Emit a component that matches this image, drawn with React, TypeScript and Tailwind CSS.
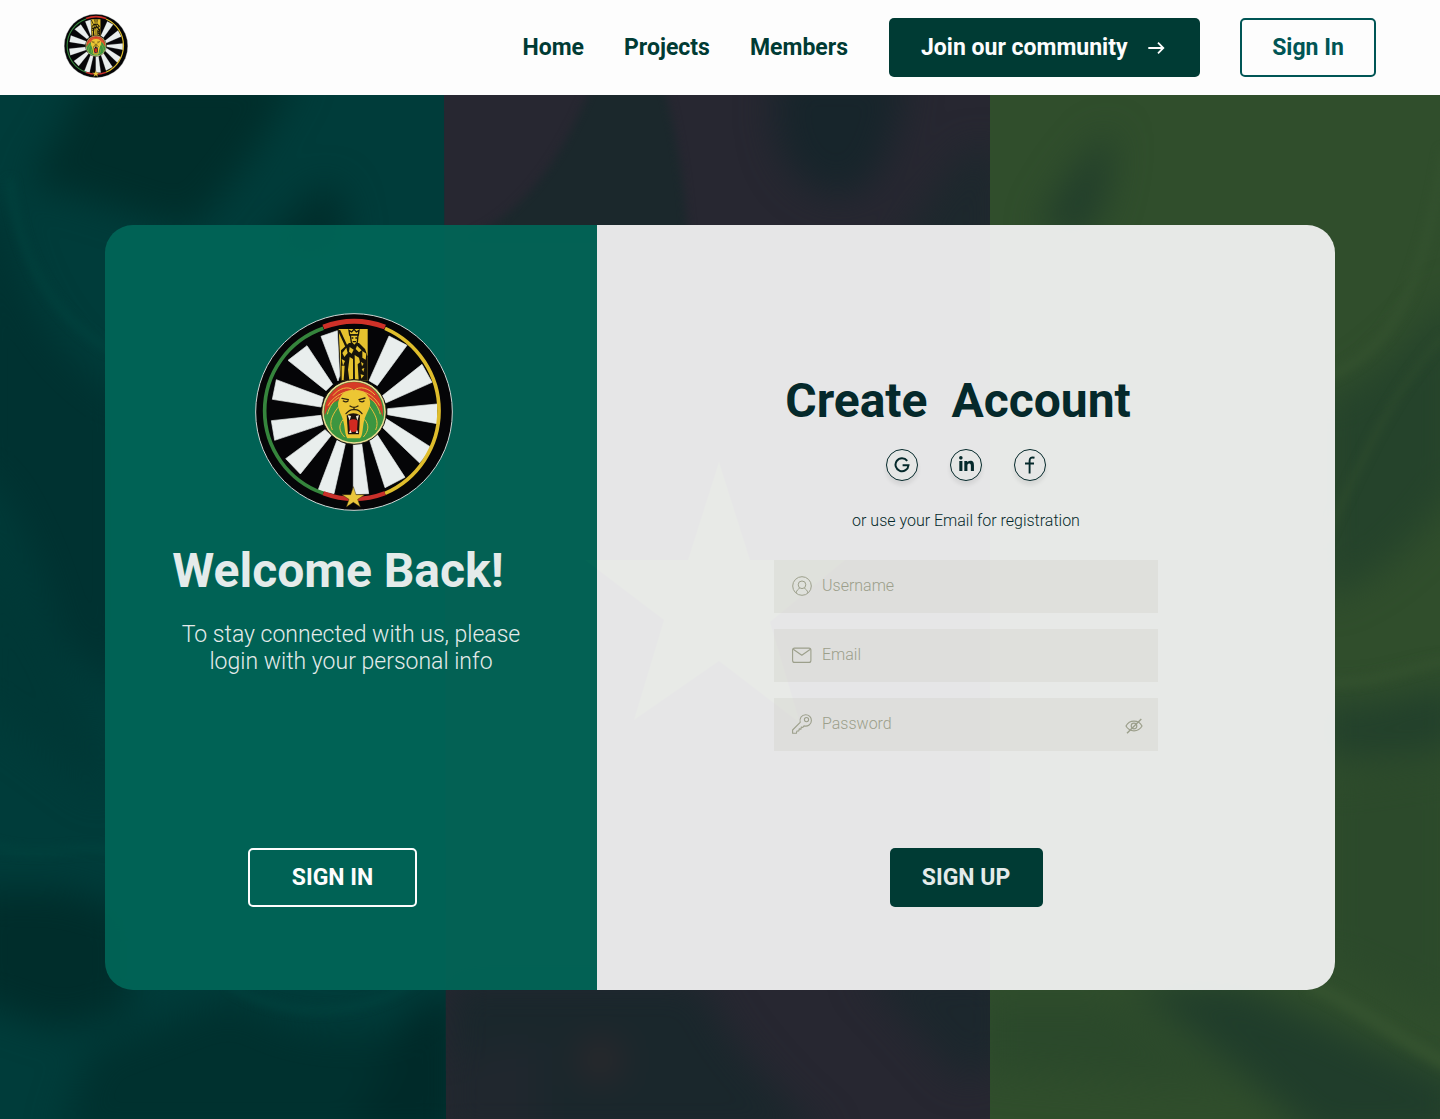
import React from "react";
import { FaLinkedinIn } from "react-icons/fa";

const spokes = [
  "228,108 277,91 284,226 279,242",
  "186,136 129,180 243,271 263,252",
  "94,238 82,297 228,320 235,291",
  "79,361 89,420 234,372 228,345",
  "122,475 166,521 259,405 240,388",
  "219,570 267,580 301,430 276,420",
  "325,582 371,580 350,428 325,432",
  "420,562 480,531 396,402 374,420",
  "524,488 560,442 422,354 411,380",
  "576,311 576,370 428,343 428,325",
  "561,246 531,192 411,287 422,308",
  "486,135 432,107 372,241 397,256",
];

function Emblem({ className }: { className?: string }) {
  return (
    <svg viewBox="30 38 594 594" className={className} aria-label="Round Table emblem">
      <circle cx="327" cy="335" r="295" fill="#050507" stroke="#cfd6d4" strokeWidth="3" />
      {spokes.map((p) => (
        <polygon key={p} points={p} fill="#e9eeed" stroke="#e9eeed" strokeWidth="2" />
      ))}
      <g fill="none" strokeWidth="11">
        <path d="M235 579A262 262 0 0 1 235 84" stroke="#35853c" />
        <path d="M420 84A270 270 0 0 1 420 579" stroke="#dfbd2c" />
        <path d="M235 80A262 262 0 0 1 420 80" stroke="#cf3128" strokeWidth="15" />
        <path d="M235 579A262 262 0 0 0 420 579" stroke="#c9302a" strokeWidth="13" />
      </g>
      <path d="M281 86H368V241H288Z" fill="#e6c22e" />
      <path d="M288 150L312 128H342L360 146L368 168V241H288Z" fill="#17140b" />
      <g stroke="#17140b" strokeWidth="4" fill="#e6c22e">
        <path d="M314 104L312 90L320 95L327 87L334 95L342 90L340 104Z" />
        <path d="M316 104H339L337 126L328 136L319 126Z" />
        <path d="M320 113h5M331 113h5M323 124h10" />
      </g>
      <path d="M282 90L309 148" stroke="#17140b" strokeWidth="7" />
      <path
        d="M292 158L304 142L308 158L298 170ZM314 140L326 148L320 160L312 154ZM336 136L350 150L342 156L332 146ZM352 152L364 160L362 178L352 172ZM290 176L300 182L294 196ZM290 196H299L296 239H290ZM314 170L324 176V236L313 240L309 208ZM329 164L342 172L345 186L338 192L341 238H330ZM348 184L356 190L351 198ZM350 206L358 203L355 215ZM347 222L357 225L349 235Z"
        fill="#e6c22e"
      />
      <circle cx="327" cy="335" r="97" fill="#e9dc92" stroke="#16160f" strokeWidth="3" />
      <circle cx="327" cy="335" r="91" fill="#3c9640" />
      <path d="M239 347C233 288 276 246 327 245C380 246 420 288 413 350C406 324 394 307 378 300L326 267L276 302C258 310 246 323 239 347Z" fill="#d63b27" />
      <path
        d="M327 270C349 266 371 279 374 299C381 320 362 339 357 362C352 384 354 405 345 414H307C299 402 300 382 295 363C290 340 272 320 282 298C288 278 309 266 327 270Z"
        fill="#ecc634"
      />
      <g fill="none" stroke="#e9bd3c" strokeWidth="3">
        <path d="M326 271C310 254 280 265 264 286M310 274C292 274 262 292 249 316M283 291C265 300 253 320 247 342M327 271C343 254 372 264 390 284M346 274C366 274 391 291 404 316M371 291C388 300 400 320 406 342M284 315C266 338 249 362 262 389M295 357C280 374 281 392 299 410M372 315C388 338 404 362 392 389M358 357C374 374 371 392 355 410" />
      </g>
      <g fill="none" stroke="#2b230f" strokeWidth="4" strokeLinecap="round">
        <path d="M291 294l19 4M342 298l18-5M295 302q8 5 14 0M344 302q8 5 13 0M315 317q12 8 24 0M327 321v7M303 340q12-14 24-12q14-2 24 12" />
      </g>
      <path d="M305 345Q325 333 345 345L342 402H309Z" fill="#1c120d" />
      <path d="M312 361Q325 353 338 361L336 391Q325 399 314 391Z" fill="#d02a21" />
      <path d="M308 345l6 16 4-14M342 345l-5 16-4-14M312 398l4-10 4 10M340 398l-4-10-4 10" fill="#f4edd7" />
      <path d="M325 559L333 583L359 583L338 597L346 620L325 606L304 620L312 597L291 583L317 583Z" fill="#e9c63c" stroke="#3a2e10" strokeWidth="1.5" />
    </svg>
  );
}

function Backdrop() {
  return (
    <svg className="absolute inset-0 h-full w-full" viewBox="0 95 1440 1024" preserveAspectRatio="none" aria-hidden="true">
      <defs>
        <filter id="soft" x="-40%" y="-40%" width="180%" height="180%" colorInterpolationFilters="sRGB">
          <feGaussianBlur stdDeviation="18" />
        </filter>
        <filter id="fine" x="-40%" y="-40%" width="180%" height="180%" colorInterpolationFilters="sRGB">
          <feGaussianBlur stdDeviation="5" />
        </filter>
        <clipPath id="left"><path d="M0 95H444L446 1119H0Z" /></clipPath>
        <clipPath id="mid"><path d="M444 95H990V1119H446Z" /></clipPath>
        <clipPath id="right"><path d="M990 95H1440V1119H990Z" /></clipPath>
      </defs>
      <g clipPath="url(#left)">
        <path d="M0 95H450V1119H0Z" fill="#003c3a" />
        <g filter="url(#soft)">
          <path d="M90 70H300C270 130 240 180 190 230L60 190C20 190 30 180 55 140Z" fill="#002e2b" />
          <path d="M320 185C340 180 350 210 345 260H250Z" fill="#002d2b" />
          <path d="M-30 200L5 210C20 300 60 360 130 400V700L60 640C30 540 0 480 -30 470Z" fill="#003231" />
          <path d="M-30 480L40 620L105 740V800L-30 700Z" fill="#003836" />
          <path d="M-30 890L60 890L130 910V1010L60 1030L-30 1000Z" fill="#002d2b" />
          <path d="M90 1050C180 1020 210 1000 240 1000C300 1040 380 1040 450 1010V1140H60Z" fill="#00312f" />
          <path d="M410 1010L460 990V1140H350Z" fill="#002a29" />
        </g>
        <g filter="url(#fine)" fill="none" stroke="#00443f" strokeWidth="5">
          <path d="M10 180C20 270 60 320 110 350" />
          <path d="M-10 845C40 860 70 845 110 850" />
          <path d="M230 985C280 1020 370 1020 420 975" />
        </g>
      </g>
      <g clipPath="url(#mid)">
        <path d="M440 95H994V1119H440Z" fill="#272731" />
        <g filter="url(#fine)">
          <path d="M594 80H662C676 130 684 180 688 240H460C520 220 562 160 594 80Z" fill="#1b282c" />
        </g>
        <g filter="url(#soft)">
          <path d="M780 70H905C900 130 880 185 850 195C800 200 760 150 780 70Z" fill="#17252b" />
          <path d="M900 240L965 150L1000 150V260H880Z" fill="#1d282d" />
          <path d="M450 980H700C720 1030 760 1080 830 1140H446Z" fill="#1a272c" />
          <path d="M440 1060L540 1040V1140H440Z" fill="#20272e" />
          <path d="M860 970H1010V1060L960 1080Z" fill="#1c272d" />
          <circle cx="600" cy="1060" r="20" fill="#30282c" />
        </g>
      </g>
      <path d="M719 462L750 560H845L770 622L800 723L719 661L634 720L664 620L585 560H688Z" fill="#3c5c2c" opacity=".8" />
      <g clipPath="url(#right)">
        <path d="M990 95H1440V1119H990Z" fill="#304e2c" />
        <g filter="url(#soft)">
          <path d="M1040 230C1060 190 1080 160 1112 130C1112 180 1100 220 1080 240Z" fill="#213d2b" />
          <path d="M1320 400C1380 380 1420 330 1460 290V480C1420 540 1380 580 1320 600Z" fill="#25432b" />
          <path d="M1320 700C1370 715 1410 690 1460 685V745C1420 755 1370 760 1320 755Z" fill="#22402b" />
          <path d="M1320 780L1460 760V1020L1320 960Z" fill="#2c4a2b" />
          <path d="M1130 985H1240C1320 1020 1400 1060 1460 1080V1140H1320C1250 1080 1190 1030 1130 985Z" fill="#203d2b" />
          <path d="M980 1000H1110L1240 1090L980 1070Z" fill="#2b492b" />
        </g>
        <g filter="url(#fine)" fill="none" stroke="#34522f" strokeWidth="7">
          <path d="M1445 150C1420 300 1390 350 1325 378" />
          <path d="M1445 335C1400 380 1370 440 1325 540" strokeWidth="3" />
          <path d="M1325 682C1370 686 1410 666 1450 660" />
          <path d="M1310 985C1350 1000 1400 1040 1450 1065" strokeWidth="14" />
        </g>
      </g>
    </svg>
  );
}

function UserIcon() {
  return (
    <svg width="20" height="20" viewBox="0 0 20 20" fill="none" stroke="currentColor" strokeWidth="1">
      <circle cx="10" cy="10" r="9.3" />
      <circle cx="10" cy="8.8" r="3.8" />
      <path d="M4 17C4.7 14.2 6.5 12.8 7.7 12.2M16 17C15.3 14.2 13.5 12.8 12.3 12.2" />
    </svg>
  );
}

function MailIcon() {
  return (
    <svg width="20" height="20" viewBox="0 0 20 20" fill="none" stroke="currentColor" strokeWidth="1.1" strokeLinejoin="round">
      <rect x=".6" y="3.1" width="18.3" height="14.3" rx="2" />
      <path d="M1.2 4.2L9.8 10.2L18.4 4.2" />
    </svg>
  );
}

function KeyIcon() {
  return (
    <svg width="20" height="20" viewBox="0 0 20 20" fill="none" stroke="currentColor" strokeWidth="1.1" strokeLinejoin="round">
      <path d="M8.2 8.4C7.2 4.4 9.7.7 13.6.7C17 .7 19.4 3.2 19.4 6.4C19.4 10.2 15.9 12.9 12 11.9L10.8 13.5L9.3 13L9 15.3L7.2 14.9L6.8 17H4.9L4.4 19.3H.6V16Z" />
      <circle cx="14.5" cy="5.6" r="2.1" />
    </svg>
  );
}

function EyeOffIcon() {
  return (
    <svg className="relative top-0.5" width="18" height="16" viewBox="0 0 18 16" fill="none" stroke="currentColor" strokeWidth="1.2">
      <path d="M1 8C4.5 1.6 13.5 1.6 17 8C13.5 14.4 4.5 14.4 1 8Z" />
      <circle cx="9" cy="8" r="2.8" />
      <path d="M2 15.3L16.3 .9" strokeWidth="1.4" />
    </svg>
  );
}

function Social({ label, children }: { label: string; children: React.ReactNode }) {
  return (
    <button
      aria-label={label}
      className="flex size-8 items-center justify-center rounded-full border border-[#05292b] bg-[#e6e7e6] text-[#05292b] shadow-[0_4px_4px_rgba(0,0,0,0.08)]"
    >
      {children}
    </button>
  );
}

function Field({ icon, label, type, trailing }: { icon: React.ReactNode; label: string; type: string; trailing?: React.ReactNode }) {
  return (
    <label className="flex h-[53px] w-96 items-center gap-2.5 bg-[#a5a58c]/12 pl-[18px] pr-[15px] text-[#9c9f8b]">
      {icon}
      <input
        type={type}
        placeholder={label}
        className="min-w-0 flex-1 bg-transparent text-base font-light leading-5 outline-none placeholder:text-[#9c9f8b] placeholder:opacity-100"
      />
      {trailing}
    </label>
  );
}

export default function App() {
  return (
    <div className="flex h-[1119px] w-[1440px] flex-col overflow-hidden font-['Roboto',sans-serif]">
      <header className="flex h-[95px] shrink-0 items-center justify-between bg-[#fdfdfd] px-16">
        <Emblem className="mb-[3px] size-16" />
        <nav className="flex items-center text-[23px] font-bold leading-7 text-[#003b34]">
          <a className="mr-10">Home</a>
          <a className="mr-10">Projects</a>
          <a className="mr-[41px]">Members</a>
          <button className="mr-10 flex h-[59px] w-[311px] items-center rounded-[5px] bg-[#003b34] pl-8 text-[#fdfdfd]">
            Join our community
            <svg className="ml-5" width="17" height="14" viewBox="0 0 17 14" fill="none" stroke="currentColor" strokeWidth="1.8">
              <path d="M.3 7H15.3M10 1.7L15.3 7L10 12.3" />
            </svg>
          </button>
          <button className="h-[59px] w-[136px] rounded-[5px] border-2 border-[#005555] text-[#005555]">Sign In</button>
        </nav>
      </header>
      <main className="relative flex flex-1 justify-center bg-[#003a38] pt-[129.5px]">
        <Backdrop />
        <section className="relative flex h-[765px] w-[1230px] overflow-hidden rounded-[28px]">
          <div className="flex w-[492px] flex-col items-center bg-[#006557]/93 text-[#e4ebea]">
            <Emblem className="ml-1.5 mt-[88px] size-[198px]" />
            <h1 className="mr-[26px] mt-[32.5px] text-5xl font-bold leading-[56px]">Welcome Back!</h1>
            <p className="mt-[21.5px] text-center text-[23px] font-light leading-[27px]">
              To stay connected with us, please
              <br />
              login with your personal info
            </p>
            <button className="mr-[37px] mt-[173.5px] h-[59px] w-[169px] shrink-0 rounded-[5px] border-2 border-[#fdfdfd] text-[23px] font-bold leading-7 text-[#fdfdfd]">
              SIGN IN
            </button>
          </div>
          <div className="flex flex-1 flex-col items-center bg-[#f5f5f5]/93 text-[#05292b]">
            <h2 className="mr-4 mt-[148px] whitespace-pre text-5xl font-bold leading-[56px]">{"Create  Account"}</h2>
            <div className="mt-5 flex gap-8">
              <Social label="Google">
                <svg width="16" height="16" viewBox="0 0 16 16" fill="none" stroke="currentColor" strokeWidth="2">
                  <path d="M13.2 3.8A6.5 6.5 0 1 0 14.5 8.2H8.6" />
                </svg>
              </Social>
              <Social label="LinkedIn">
                <FaLinkedinIn size={17} />
              </Social>
              <Social label="Facebook">
                <svg width="12" height="18" viewBox="0 0 12 18" fill="none" stroke="currentColor" strokeWidth="1.9">
                  <path d="M10.5 1.8C6.8 1 5.6 2.2 5.6 5V17.5M1 7.5H10" />
                </svg>
              </Social>
            </div>
            <p className="mt-[30px] text-base font-light leading-5">or use your Email for registration</p>
            <form className="mt-[29px] flex flex-col gap-4">
              <Field icon={<UserIcon />} label="Username" type="text" />
              <Field icon={<MailIcon />} label="Email" type="email" />
              <Field icon={<KeyIcon />} label="Password" type="password" trailing={<EyeOffIcon />} />
            </form>
            <button className="mt-[97.5px] h-[59px] w-[153px] rounded-[5px] bg-[#003b34] text-[23px] font-bold leading-7 text-[#e4ebea]">SIGN UP</button>
          </div>
        </section>
      </main>
    </div>
  );
}
